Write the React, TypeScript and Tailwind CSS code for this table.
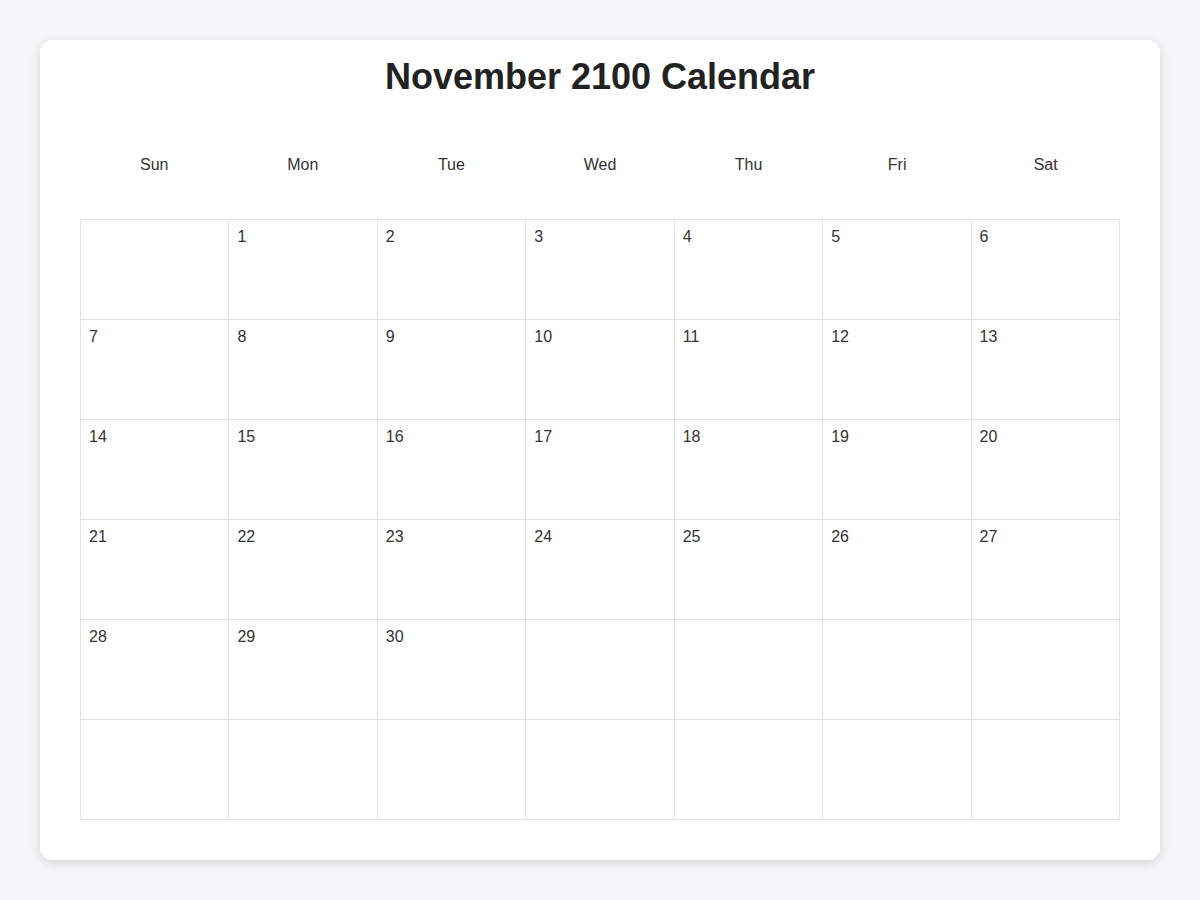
import React from 'react';

const DAYS = ['Sun', 'Mon', 'Tue', 'Wed', 'Thu', 'Fri', 'Sat'];

// November 2100 starts on a Monday, 30 days, 6 rows shown
const buildCells = () => {
  const cells: (number | null)[] = [];
  const offset = 1;
  for (let i = 0; i < 42; i++) {
    const day = i - offset + 1;
    cells.push(day >= 1 && day <= 30 ? day : null);
  }
  return cells;
};

export default function App() {
  const cells = buildCells();

  return (
    <div
      className="min-h-screen bg-[#f5f6f8] p-10 text-[#333]"
      style={{ fontFamily: '"Liberation Sans", Arial, Helvetica, sans-serif' }}
    >
      <div className="bg-white rounded-xl shadow-[0_3px_12px_rgba(0,0,0,0.14)] px-10 pt-[17px] pb-10">
        <h1 className="text-center text-[36px] leading-[40px] font-bold text-[#222]">
          November 2100 Calendar
        </h1>

        {/* Weekday header */}
        <div className="grid grid-cols-7 mt-[56px] mb-[42px]">
          {DAYS.map((d) => (
            <div key={d} className="text-center text-base leading-[24px]">
              {d}
            </div>
          ))}
        </div>

        {/* Date grid */}
        <div className="grid grid-cols-7 border-l border-t border-[#e2e2e2]">
          {cells.map((day, i) => (
            <div
              key={i}
              className="h-[100px] border-r border-b border-[#e2e2e2] pt-[8px] pl-2 text-base leading-[18px]"
            >
              {day ?? ''}
            </div>
          ))}
        </div>
      </div>
    </div>
  );
}
